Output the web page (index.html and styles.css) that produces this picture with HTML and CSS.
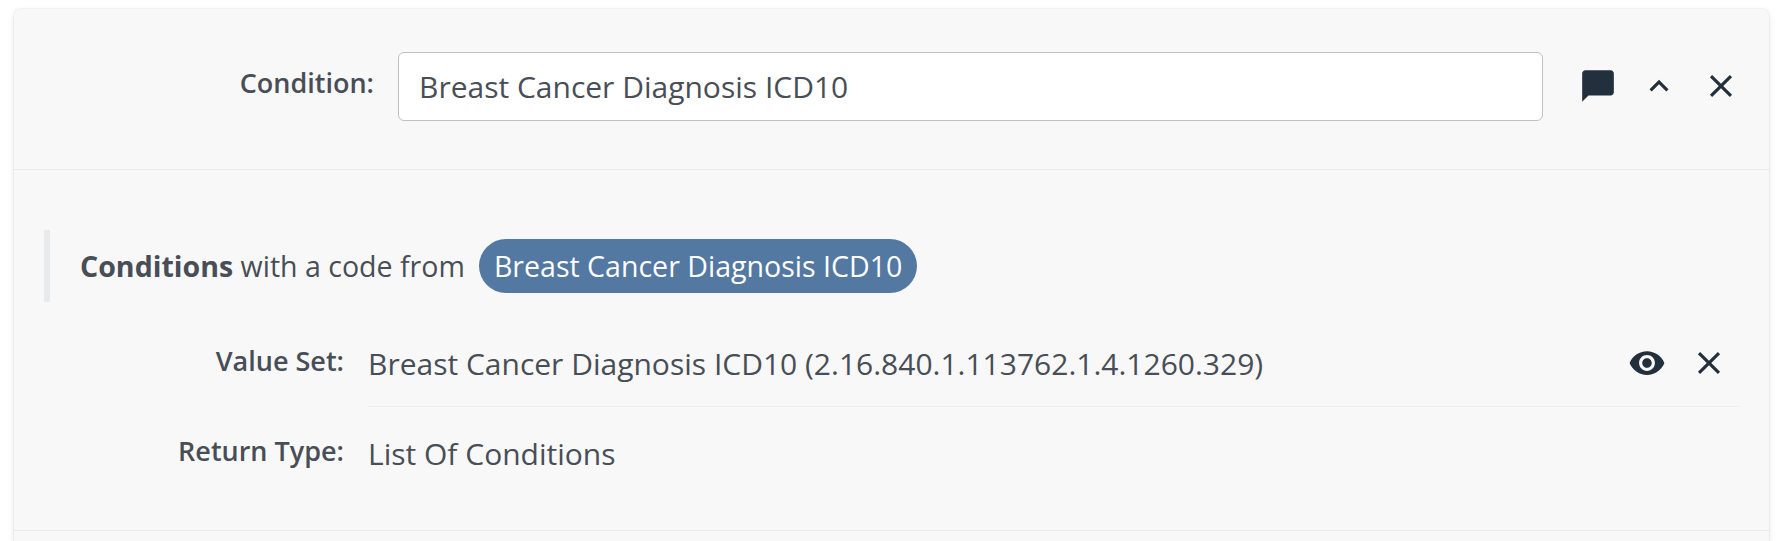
FILE: index.html
```html
<!DOCTYPE html>
<html lang="en">
<head>
<meta charset="utf-8">
<title>Condition</title>
<link rel="stylesheet" href="styles.css">
</head>
<body>
<svg class="sprite" aria-hidden="true">
  <symbol id="close" viewBox="0 0 24 24"><path d="M19 6.41 17.59 5 12 10.59 6.41 5 5 6.41 10.59 12 5 17.59 6.41 19 12 13.41 17.59 19 19 17.59 13.41 12z"/></symbol>
</svg>
<main class="card">
  <header class="card-header">
    <label class="label header-label" for="name">Condition:</label>
    <input class="field" id="name" type="text" value="Breast Cancer Diagnosis ICD10">
    <div class="actions">
      <svg class="icon comment" viewBox="0 0 24 24"><path d="M20 2H4c-1.1 0-1.99.9-1.99 2L2 22l4-4h14c1.1 0 2-.9 2-2V4c0-1.1-.9-2-2-2z"/></svg>
      <svg class="icon" viewBox="0 0 24 24"><path d="m12 8-6 6 1.41 1.41L12 10.83l4.59 4.58L18 14z"/></svg>
      <svg class="icon"><use href="#close"/></svg>
    </div>
  </header>
  <section class="card-body">
    <p class="phrase"><span class="phrase-text"><b>Conditions</b> with a code from</span><span class="pill">Breast Cancer Diagnosis ICD10</span></p>
    <div class="row">
      <span class="label row-label">Value Set:</span>
      <div class="row-content ruled">
        <span class="value">Breast Cancer Diagnosis ICD10 (2.16.840.1.113762.1.4.1260.329)</span>
        <div class="actions row-actions">
          <svg class="icon" viewBox="0 0 24 24"><path d="M12 4.5C7 4.5 2.73 7.61 1 12c1.73 4.39 6 7.5 11 7.5s9.27-3.11 11-7.5c-1.73-4.39-6-7.5-11-7.5zM12 17c-2.76 0-5-2.24-5-5s2.24-5 5-5 5 2.24 5 5-2.24 5-5 5zm0-8c-1.66 0-3 1.34-3 3s1.34 3 3 3 3-1.34 3-3-1.34-3-3-3z"/></svg>
          <svg class="icon"><use href="#close"/></svg>
        </div>
      </div>
    </div>
    <div class="row">
      <span class="label row-label">Return Type:</span>
      <div class="row-content"><span class="value">List Of Conditions</span></div>
    </div>
  </section>
</main>
</body>
</html>
```
FILE: styles.css
```css
* { box-sizing: border-box; }
body {
  margin: 0;
  padding: 9px 17px 0 14px;
  background: #fff;
  color: #484e56;
  font-family: "Open Sans", sans-serif;
}
.sprite { display: none; }
.card {
  height: 532px;
  background: #f8f8f8;
  border-radius: 7px 7px 0 0;
  box-shadow: 0 0 0 1px rgba(0,0,0,.035), 0 2px 6px rgba(0,0,0,.1);
}
.card-header {
  display: flex;
  height: 161px;
  padding: 43px 29px 0 0;
  border-bottom: 1px solid #e9e9e9;
}
.label {
  font-size: 27px;
  font-weight: 600;
  line-height: 36px;
  text-align: right;
}
.header-label { width: 360px; padding-top: 13px; }
.field {
  width: 1145px;
  height: 69px;
  margin-left: 24px;
  padding: 0 20px;
  border: 1px solid #c0c0c0;
  border-radius: 6px;
  background: #fff;
  color: inherit;
  font: 30px "Open Sans", sans-serif;
  outline: 0;
}
.actions { display: flex; gap: 24px; }
.card-header .actions { margin: 15px 0 0 auto; }
.icon { width: 38px; height: 38px; fill: #222f3c; }
.comment { margin-right: -1px; }
.card-body {
  height: 361px;
  padding: 60px 30px 0 30px;
  border-bottom: 1px solid #e9e9e9;
}
.phrase {
  display: flex;
  align-items: center;
  height: 72px;
  margin: 0 0 14px;
  padding-left: 30px;
  border-left: 6px solid #e7ebee;
  font-size: 28.55px;
  white-space: nowrap;
}
.phrase-text { line-height: 54px; }
.pill {
  height: 54px;
  margin-left: 14px;
  padding: 0 15px;
  border-radius: 27px;
  background: #5378a2;
  color: #fff;
  line-height: 54px;
}
.row { display: flex; height: 91px; }
.row + .row { margin-top: -1px; }
.row-label { width: 300px; padding-top: 27px; }
.row-content {
  display: flex;
  flex: 1;
  margin-left: 24px;
  padding-top: 27px;
}
.ruled { border-bottom: 1px solid #eee; }
.value { font-size: 30px; line-height: 41px; white-space: nowrap; }
.row-actions { margin: 1px 11px 0 auto; }
```
